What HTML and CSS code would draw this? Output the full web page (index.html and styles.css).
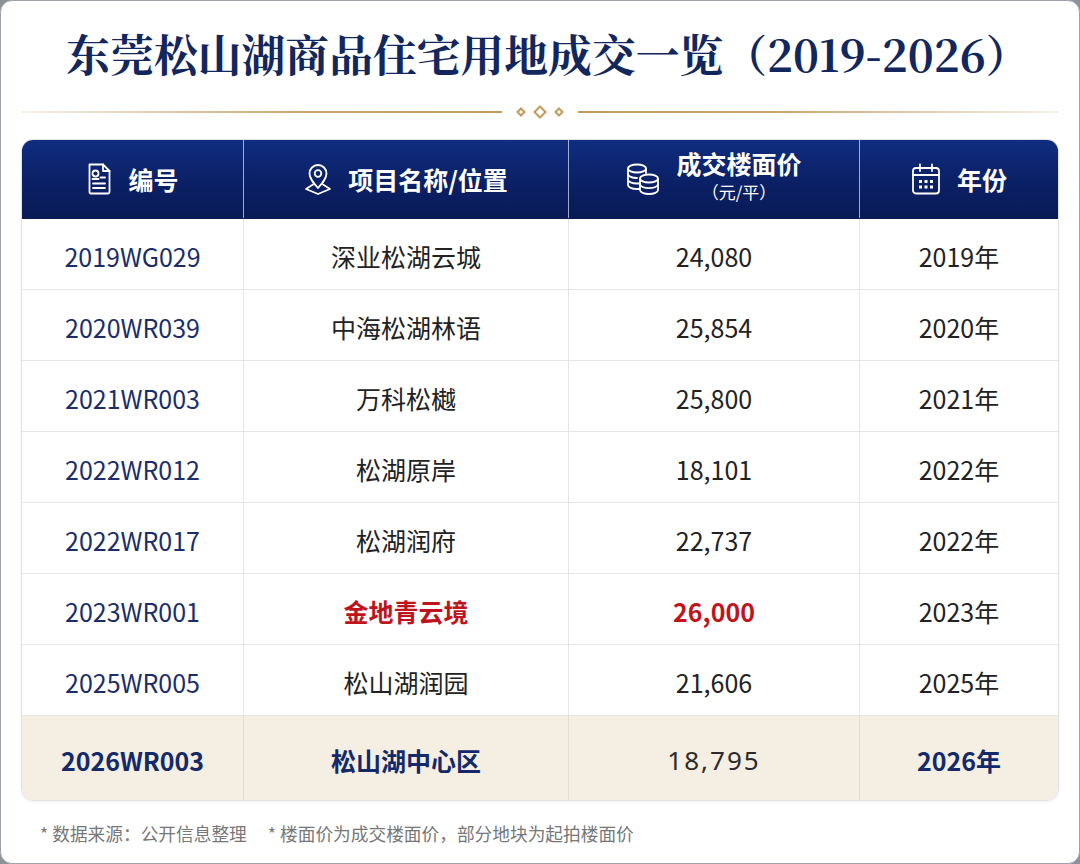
FILE: index.html
```html
<!DOCTYPE html>
<html lang="zh-CN">
<head>
<meta charset="utf-8">
<title>东莞松山湖商品住宅用地成交一览</title>
<link rel="stylesheet" href="styles.css">
</head>
<body>
<div class="card">
  <h1 class="title">东莞松山湖商品住宅用地成交一览（2019-2026）</h1>
  <div class="divider">
    <span class="line line-left"></span>
    <svg class="ornament" width="48" height="14" viewBox="0 0 48 14">
      <path d="M5 3.5 L8.5 7 L5 10.5 L1.5 7 Z" fill="#fff" stroke="#c49a5c" stroke-width="2"/>
      <path d="M24 1.5 L29.5 7 L24 12.5 L18.5 7 Z" fill="#fff" stroke="#c49a5c" stroke-width="2"/>
      <path d="M43 3.5 L46.5 7 L43 10.5 L39.5 7 Z" fill="#fff" stroke="#c49a5c" stroke-width="2"/>
    </svg>
    <span class="line line-right"></span>
  </div>

  <div class="table">
    <div class="row head">
      <div class="cell">
        <svg class="icon" width="26" height="32" viewBox="0 0 26 32" fill="none" stroke="#fff" stroke-width="1.8" stroke-linejoin="round" stroke-linecap="round">
          <path d="M3.5 1.5 H17 L23.5 8 V29 Q23.5 30.5 22 30.5 H5 Q3.5 30.5 3.5 29 Z"/>
          <path d="M17 1.5 V8 H23.5"/>
          <circle cx="9.5" cy="10.5" r="3"/>
          <path d="M6.5 16 H12.5"/>
          <path d="M14.5 14.5 H19"/>
          <path d="M7 20.5 H19"/>
          <path d="M7 25 H19"/>
        </svg>
        <span class="hlabel">编号</span>
      </div>
      <div class="cell">
        <svg class="icon" width="28" height="32" viewBox="0 0 28 32" fill="none" stroke="#fff" stroke-width="1.8" stroke-linejoin="round" stroke-linecap="round">
          <path d="M14 25 C9 19.5 5.5 15.5 5.5 10.5 A8.5 8.5 0 0 1 22.5 10.5 C22.5 15.5 19 19.5 14 25 Z"/>
          <circle cx="14" cy="10.5" r="3.3"/>
          <path d="M9 21.5 L2 26 L14 31 L26 26 L19 21.5"/>
        </svg>
        <span class="hlabel">项目名称/位置</span>
      </div>
      <div class="cell">
        <svg class="icon" width="34" height="33" viewBox="0 0 34 33" fill="none" stroke="#fff" stroke-width="1.8" stroke-linejoin="round" stroke-linecap="round">
          <ellipse cx="11" cy="5.5" rx="9" ry="4"/>
          <path d="M2 5.5 V11 C2 13.2 6 15 11 15"/>
          <path d="M20 5.5 V10"/>
          <path d="M2 11 V16.5 C2 18.7 6 20.5 11 20.5 H13"/>
          <path d="M2 16.5 V22 C2 24.2 6 26 11 26 H13"/>
          <ellipse cx="23" cy="15.5" rx="9" ry="4"/>
          <path d="M14 15.5 V27 C14 29.2 18 31 23 31 C28 31 32 29.2 32 27 V15.5"/>
          <path d="M14 21.2 C14 23.4 18 25.2 23 25.2 C28 25.2 32 23.4 32 21.2"/>
        </svg>
        <span class="hstack">
          <span class="hlabel hlabel-top">成交楼面价</span>
          <span class="hsub">（元/平）</span>
        </span>
      </div>
      <div class="cell">
        <svg class="icon" width="30" height="32" viewBox="0 0 30 32" fill="none" stroke="#fff" stroke-width="1.8" stroke-linejoin="round" stroke-linecap="round">
          <rect x="2" y="5" width="26" height="25.5" rx="3"/>
          <path d="M2 12 H28"/>
          <path d="M9 1.5 V8"/>
          <path d="M21 1.5 V8"/>
          <g fill="#fff" stroke="none">
            <rect x="8" y="17" width="3" height="3"/>
            <rect x="13.5" y="17" width="3" height="3"/>
            <rect x="19" y="17" width="3" height="3"/>
            <rect x="8" y="22.5" width="3" height="3"/>
            <rect x="13.5" y="22.5" width="3" height="3"/>
            <rect x="19" y="22.5" width="3" height="3"/>
          </g>
        </svg>
        <span class="hlabel">年份</span>
      </div>
    </div>

    <div class="row"><div class="cell code">2019WG029</div><div class="cell">深业松湖云城</div><div class="cell">24,080</div><div class="cell">2019年</div></div>
    <div class="row"><div class="cell code">2020WR039</div><div class="cell">中海松湖林语</div><div class="cell">25,854</div><div class="cell">2020年</div></div>
    <div class="row"><div class="cell code">2021WR003</div><div class="cell">万科松樾</div><div class="cell">25,800</div><div class="cell">2021年</div></div>
    <div class="row"><div class="cell code">2022WR012</div><div class="cell">松湖原岸</div><div class="cell">18,101</div><div class="cell">2022年</div></div>
    <div class="row"><div class="cell code">2022WR017</div><div class="cell">松湖润府</div><div class="cell">22,737</div><div class="cell">2022年</div></div>
    <div class="row"><div class="cell code">2023WR001</div><div class="cell red">金地青云境</div><div class="cell red">26,000</div><div class="cell">2023年</div></div>
    <div class="row"><div class="cell code">2025WR005</div><div class="cell">松山湖润园</div><div class="cell">21,606</div><div class="cell">2025年</div></div>
    <div class="row last"><div class="cell code strong">2026WR003</div><div class="cell strong">松山湖中心区</div><div class="cell price-last">18,795</div><div class="cell strong">2026年</div></div>
  </div>

  <p class="note"><span class="note-a">* 数据来源：公开信息整理</span><span>* 楼面价为成交楼面价，部分地块为起拍楼面价</span></p>
</div>
</body>
</html>
```

FILE: styles.css
```css
* { box-sizing: border-box; }

html, body {
  margin: 0;
  padding: 0;
  background: #8d929a;
}

body {
  font-family: "Noto Sans CJK SC", "Noto Sans", sans-serif;
  color: #222;
}

.card {
  width: 1080px;
  height: 864px;
  background: #fff;
  border: 1px solid #9ea3ab;
  border-radius: 12px;
  padding: 22px 20px 0 20px;
  overflow: hidden;
}

.title {
  margin: 0;
  height: 62px;
  padding-left: 16px;
  line-height: 62px;
  text-align: center;
  font-family: "Noto Serif CJK SC", "Source Han Serif SC", "Noto Sans CJK SC", serif;
  font-weight: 700;
  font-size: 43.8px;
  color: #13275f;
  white-space: nowrap;
}

.divider {
  margin-top: 20px;
  height: 14px;
  display: flex;
  align-items: center;
  gap: 14px;
}

.line {
  flex: 1;
  height: 2px;
}

.line-left {
  background: linear-gradient(90deg, rgba(200,165,110,0.15) 0%, #c9a46c 60%, #c49a5c 100%);
}

.line-right {
  background: linear-gradient(90deg, #c49a5c 0%, #c9a46c 40%, rgba(200,165,110,0.15) 100%);
}

.ornament { display: block; flex: none; }

.table {
  margin-top: 20px;
  border: 1px solid #e2e2e2;
  border-radius: 12px;
  overflow: hidden;
  box-shadow: 0 1px 3px rgba(0,0,0,0.06);
}

.row {
  display: grid;
  grid-template-columns: 222px 325px 291px 1fr;
  height: 71px;
  border-bottom: 1px solid #e6e6e6;
}

.row .cell {
  display: flex;
  align-items: center;
  justify-content: center;
  border-right: 1px solid #e6e6e6;
  font-size: 25px;
  color: #222;
  padding-top: 4px;
}

.row .cell:last-child { border-right: none; }

.head {
  height: 79px;
  background: linear-gradient(180deg, #0f2d7f 0%, #0b2066 55%, #091a56 100%);
  border-bottom: 1px solid #0a1a55;
}

.head .cell {
  gap: 16px;
  border-right: 1px solid rgba(210,218,240,0.75);
  padding-top: 0;
  color: #fff;
}

.icon { display: block; flex: none; }

.hlabel {
  font-size: 25px;
  font-weight: 700;
  color: #fff;
  line-height: 30px;
}

.hstack {
  display: flex;
  flex-direction: column;
  align-items: center;
  margin-top: -6px;
}

.hlabel-top { line-height: 30px; }

.hsub {
  font-size: 17px;
  color: #fff;
  line-height: 24px;
  margin-top: 2px;
}

.row .code { color: #1b2d6b; }

.row .red {
  color: #c0141c;
  font-weight: 700;
}

.last {
  height: 84px;
  border-bottom: none;
  background: #f5eee2;
}

.last .cell { border-right-color: #e3dccf; }

.row .strong {
  color: #13296a;
  font-weight: 700;
}

.row .price-last {
  font-family: "Noto Sans", "Noto Sans CJK SC", sans-serif;
  font-size: 26px;
  letter-spacing: 2px;
  color: #2b2b2b;
}

.note {
  margin: 20px 0 0 19px;
  font-size: 17.7px;
  line-height: 24px;
  color: #777;
}

.note-a { margin-right: 21px; }
```
